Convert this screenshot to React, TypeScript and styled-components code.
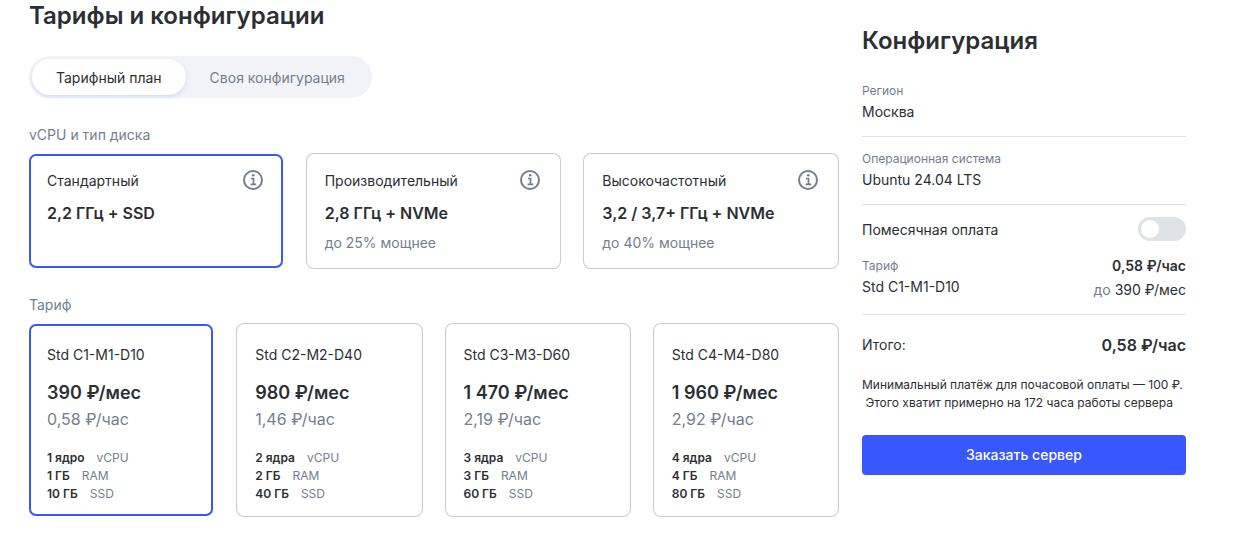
import React, { useState } from 'react';
import styled, { createGlobalStyle } from 'styled-components';

const color = {
  text: '#2b2f33',
  muted: '#747e8c',
  accent: '#3857ff',
  cardBorder: '#c8cad6',
  divider: '#dee0e6',
  tabs: '#f2f3f9',
  toggle: '#dfe2e7',
};

const GlobalStyle = createGlobalStyle`
  *, *::before, *::after { box-sizing: border-box; }
  body {
    margin: 0;
    background: #fff;
    color: ${color.text};
    font: 400 14px/20px Inter, "Liberation Sans", sans-serif;
  }
  h1, h2, p, dl, dt, dd, fieldset, ul { margin: 0; padding: 0; }
  fieldset { border: 0; min-width: 0; }
  ul { list-style: none; }
  button { font: inherit; border: 0; cursor: pointer; }
`;

const Page = styled.div`
  display: grid;
  grid-template-columns: minmax(0, 1fr) 324px;
  gap: 24px;
  padding: 0 59px 20px 29px;
`;

const Title = styled.h1`
  font-size: 24px;
  line-height: 32px;
  font-weight: 600;
`;

const Tabs = styled.div`
  display: inline-flex;
  margin-top: 24px;
  padding: 3px;
  border-radius: 21px;
  background: ${color.tabs};
`;

const Tab = styled.button<{ $active: boolean }>`
  height: 36px;
  padding: 2px 24px 0;
  border-radius: 18px;
  background: ${(p) => (p.$active ? '#fff' : 'transparent')};
  color: ${(p) => (p.$active ? color.text : color.muted)};
  box-shadow: ${(p) => (p.$active ? '0 2px 4px rgba(80, 110, 210, 0.18)' : 'none')};
`;

const Group = styled.fieldset`
  margin-top: 27px;
`;

const GroupName = styled.legend`
  padding: 0;
  margin-bottom: 9px;
  color: ${color.muted};
`;

const Cards = styled.div<{ $columns: number }>`
  display: grid;
  grid-template-columns: repeat(${(p) => p.$columns}, minmax(0, 1fr));
  gap: 24px;
`;

const Card = styled.div<{ $selected: boolean }>`
  position: relative;
  border-radius: 7px;
  border: 2px solid ${(p) => (p.$selected ? color.accent : 'transparent')};
  box-shadow: ${(p) => (p.$selected ? 'none' : `0 0 0 1px ${color.cardBorder}`)};
`;

const CpuCard = styled(Card)`
  padding: 15px 18px 13px 16px;
`;

const PlanCard = styled(Card)`
  padding: 19px 16px 11px;
`;

const HiddenRadio = styled.input`
  position: absolute;
  opacity: 0;
  pointer-events: none;
`;

const CardName = styled.label`
  display: block;
  cursor: pointer;

  &::after {
    content: '';
    position: absolute;
    inset: 0;
  }
`;

const CardHead = styled.div`
  display: flex;
  justify-content: space-between;
  height: 20px;
`;

const InfoButton = styled.button`
  position: relative;
  z-index: 1;
  width: 20px;
  height: 20px;
  padding: 0;
  margin-top: -1px;
  background: none;
  color: ${color.muted};

  svg { display: block; }
`;

const Frequency = styled.p`
  margin-top: 10px;
  font-size: 16px;
  line-height: 24px;
  font-weight: 600;
`;

const Boost = styled.p`
  margin-top: 8px;
  min-height: 20px;
  color: ${color.muted};
`;

const MonthPrice = styled.p`
  margin-top: 16px;
  font-size: 18px;
  line-height: 24px;
  font-weight: 600;
`;

const HourPrice = styled.p`
  margin-top: 2px;
  font-size: 16px;
  line-height: 24px;
  color: ${color.muted};
`;

const Specs = styled.ul`
  margin-top: 18px;
  font-size: 12px;
  line-height: 18px;
`;

const Spec = styled.li`
  display: flex;
  gap: 12px;
  color: ${color.muted};

  strong {
    font-weight: 600;
    color: ${color.text};
  }
`;

const Summary = styled.aside`
  padding-top: 25px;
`;

const SummaryTitle = styled(Title).attrs({ as: 'h2' })`
  margin-bottom: 12px;
`;

const Section = styled.dl`
  display: flex;
  justify-content: space-between;
  padding: 13px 0 14px;
  border-bottom: 1px solid ${color.divider};
`;

const Term = styled.dt`
  font-size: 12px;
  line-height: 18px;
  margin-bottom: 2px;
  color: ${color.muted};
`;

const Cost = styled.dd`
  text-align: right;

  strong {
    display: block;
    margin-bottom: 5px;
    line-height: 18px;
    font-weight: 600;
  }
  span { color: ${color.muted}; }
`;

const Row = styled.div`
  display: flex;
  justify-content: space-between;
  align-items: center;
  height: 24px;
`;

const MonthlyRow = styled(Row)`
  margin: 12px 0 3px;

  label { padding-top: 2px; }
`;

const TotalRow = styled(Row)`
  margin: 18px 0 19px;

  strong {
    font-size: 16px;
    line-height: 24px;
    font-weight: 600;
  }
`;

const Toggle = styled.input`
  appearance: none;
  width: 48px;
  height: 24px;
  margin: 0;
  padding: 3px;
  border-radius: 12px;
  background: ${color.toggle};
  cursor: pointer;

  &::before {
    content: '';
    display: block;
    width: 18px;
    height: 18px;
    border-radius: 50%;
    background: #fff;
  }
  &:checked { background: ${color.accent}; }
  &:checked::before { margin-left: 24px; }
`;

const Note = styled.p`
  font-size: 12px;
  line-height: 18px;
  white-space: nowrap;
`;

const OrderButton = styled.button`
  width: 100%;
  height: 40px;
  margin-top: 23px;
  border-radius: 4px;
  background: ${color.accent};
  color: #fff;
  font-weight: 500;
`;

const InfoIcon = () => (
  <svg width="20" height="20" viewBox="0 0 20 20" fill="none" stroke="currentColor" aria-hidden="true">
    <circle cx="10" cy="10" r="9" strokeWidth="2" />
    <circle cx="10.2" cy="5.3" r="1.3" fill="currentColor" stroke="none" />
    <path d="M8 8.5h2.5v5.6M7.6 14.3h5.6" strokeWidth="1.7" />
  </svg>
);

const cpuTypes = [
  { name: 'Стандартный', frequency: '2,2 ГГц + SSD', boost: '' },
  { name: 'Производительный', frequency: '2,8 ГГц + NVMe', boost: 'до 25% мощнее' },
  { name: 'Высокочастотный', frequency: '3,2 / 3,7+ ГГц + NVMe', boost: 'до 40% мощнее' },
];

const plans = [
  { name: 'Std C1-M1-D10', month: '390', hour: '0,58', cpu: '1 ядро', ram: '1 ГБ', disk: '10 ГБ' },
  { name: 'Std C2-M2-D40', month: '980', hour: '1,46', cpu: '2 ядра', ram: '2 ГБ', disk: '40 ГБ' },
  { name: 'Std C3-M3-D60', month: '1 470', hour: '2,19', cpu: '3 ядра', ram: '3 ГБ', disk: '60 ГБ' },
  { name: 'Std C4-M4-D80', month: '1 960', hour: '2,92', cpu: '4 ядра', ram: '4 ГБ', disk: '80 ГБ' },
];

const tabs = ['Тарифный план', 'Своя конфигурация'];

export default function App() {
  const [tab, setTab] = useState(0);
  const [cpu, setCpu] = useState(0);
  const [planIndex, setPlanIndex] = useState(0);
  const plan = plans[planIndex];

  return (
    <>
      <GlobalStyle />
      <Page>
        <main>
          <Title>Тарифы и конфигурации</Title>
          <Tabs role="tablist">
            {tabs.map((name, i) => (
              <Tab key={name} type="button" role="tab" aria-selected={tab === i} $active={tab === i} onClick={() => setTab(i)}>
                {name}
              </Tab>
            ))}
          </Tabs>

          <Group>
            <GroupName>vCPU и тип диска</GroupName>
            <Cards $columns={3}>
              {cpuTypes.map((item, i) => (
                <CpuCard key={item.name} $selected={cpu === i}>
                  <HiddenRadio type="radio" name="cpu" id={`cpu-${i}`} checked={cpu === i} onChange={() => setCpu(i)} />
                  <CardHead>
                    <CardName htmlFor={`cpu-${i}`}>{item.name}</CardName>
                    <InfoButton type="button" aria-label="Подробнее">
                      <InfoIcon />
                    </InfoButton>
                  </CardHead>
                  <Frequency>{item.frequency}</Frequency>
                  <Boost>{item.boost}</Boost>
                </CpuCard>
              ))}
            </Cards>
          </Group>

          <Group>
            <GroupName>Тариф</GroupName>
            <Cards $columns={4}>
              {plans.map((item, i) => (
                <PlanCard key={item.name} $selected={planIndex === i}>
                  <HiddenRadio type="radio" name="plan" id={`plan-${i}`} checked={planIndex === i} onChange={() => setPlanIndex(i)} />
                  <CardName htmlFor={`plan-${i}`}>{item.name}</CardName>
                  <MonthPrice>{item.month} ₽/мес</MonthPrice>
                  <HourPrice>{item.hour} ₽/час</HourPrice>
                  <Specs>
                    <Spec><strong>{item.cpu}</strong>vCPU</Spec>
                    <Spec><strong>{item.ram}</strong>RAM</Spec>
                    <Spec><strong>{item.disk}</strong>SSD</Spec>
                  </Specs>
                </PlanCard>
              ))}
            </Cards>
          </Group>
        </main>

        <Summary>
          <SummaryTitle>Конфигурация</SummaryTitle>
          <Section>
            <div>
              <Term>Регион</Term>
              <dd>Москва</dd>
            </div>
          </Section>
          <Section>
            <div>
              <Term>Операционная система</Term>
              <dd>Ubuntu 24.04 LTS</dd>
            </div>
          </Section>
          <MonthlyRow>
            <label htmlFor="monthly">Помесячная оплата</label>
            <Toggle type="checkbox" role="switch" id="monthly" />
          </MonthlyRow>
          <Section>
            <div>
              <Term>Тариф</Term>
              <dd>{plan.name}</dd>
            </div>
            <Cost>
              <strong>{plan.hour} ₽/час</strong>
              <span>до</span> {plan.month} ₽/мес
            </Cost>
          </Section>
          <TotalRow>
            <span>Итого:</span>
            <strong>{plan.hour} ₽/час</strong>
          </TotalRow>
          <Note>
            Минимальный платёж для почасовой оплаты — 100 ₽.
            <br />
            {'\u00a0'}Этого хватит примерно на 172 часа работы сервера
          </Note>
          <OrderButton type="button">Заказать сервер</OrderButton>
        </Summary>
      </Page>
    </>
  );
}
